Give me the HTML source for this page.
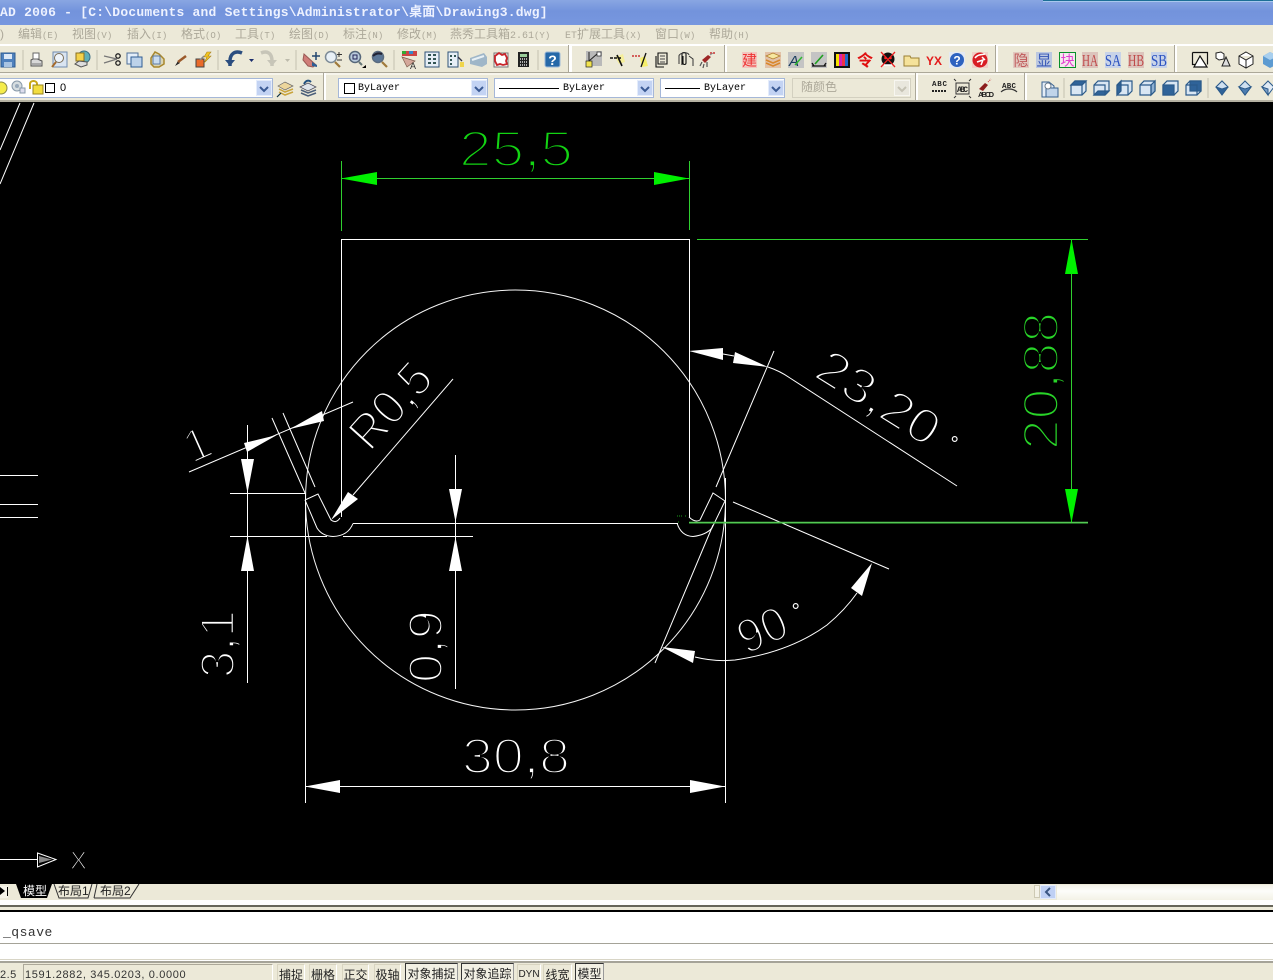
<!DOCTYPE html>
<html><head><meta charset="utf-8"><style>
html,body{margin:0;padding:0;background:#000;width:1273px;height:980px;overflow:hidden}
*{box-sizing:border-box}
.a{position:absolute}
#root{position:relative;width:1273px;height:980px;overflow:hidden;font-family:"Liberation Sans","Noto Sans CJK SC",sans-serif}
.m{position:absolute;top:27px;font-size:12px;line-height:15px;color:#aca899;white-space:nowrap;font-family:"Liberation Sans","WenQuanYi Zen Hei","Noto Sans CJK SC",sans-serif}
.m small{font-size:9px;font-family:"Liberation Mono",monospace}
.combo{position:absolute;top:78px;height:20px;background:#fff;border:1px solid #a5b7d8;font:10px/18px "Liberation Mono",monospace;color:#000}
.btn{position:absolute;top:1px;right:0;width:16px;height:16px;background:#c3d3f3;border:1px solid #e4ecfb}
.btn svg{position:absolute;left:2px;top:3px}
.s{position:absolute;top:964px;height:16px;font:12px/20px "Liberation Sans","WenQuanYi Zen Hei","Noto Sans CJK SC",sans-serif;color:#222;text-align:center;border:1px solid #d8d4c0;border-right-color:#fff;border-bottom:0;white-space:nowrap;overflow:hidden}
.s.p{border:1px solid #333;border-bottom:0;border-right-color:#999;background:#f2f0e4;top:963px;height:17px;line-height:21px}
</style></head><body><div id="root">
<div class="a" style="left:0;top:0;width:1273px;height:25px;background:linear-gradient(#89a6e2,#7393dc 45%,#7797df)"></div>
<div class="a" style="left:1043px;top:0;width:230px;height:2px;background:#a8c8ee;border-top:1px solid #1c6f96"></div>
<div class="a" style="left:0;top:4px;font:bold 13px/18px 'Liberation Mono','Noto Sans CJK SC',monospace;letter-spacing:.22px;color:#eef2ff;white-space:pre">AD 2006 - [C:\Documents and Settings\Administrator\桌面\Drawing3.dwg]</div>
<div class="a" style="left:0;top:25px;width:1273px;height:77px;background:#ece9d8"></div>
<div class="m" style="left:0">)</div>
<div class="m" style="left:18px">编辑<small>(E)</small></div>
<div class="m" style="left:72px">视图<small>(V)</small></div>
<div class="m" style="left:127px">插入<small>(I)</small></div>
<div class="m" style="left:181px">格式<small>(O)</small></div>
<div class="m" style="left:235px">工具<small>(T)</small></div>
<div class="m" style="left:289px">绘图<small>(D)</small></div>
<div class="m" style="left:343px">标注<small>(N)</small></div>
<div class="m" style="left:397px">修改<small>(M)</small></div>
<div class="m" style="left:450px">燕秀工具箱<small style="font-size:10px">2.61</small><small>(Y)</small></div>
<div class="m" style="left:565px"><small style="font-size:10px">ET</small>扩展工具<small>(X)</small></div>
<div class="m" style="left:655px">窗口<small>(W)</small></div>
<div class="m" style="left:709px">帮助<small>(H)</small></div>
<div class="a" style="left:0;top:44px;width:1273px;height:2px;background:#fff"></div>
<div class="a" style="left:0;top:72px;width:1273px;height:1px;background:#aca899"></div>
<div class="a" style="left:0;top:73px;width:1273px;height:2px;background:#f7f5ec"></div>
<div class="a" style="left:0;top:100px;width:1273px;height:2px;background:#b5b2a2"></div>
<!-- toolbar breaks -->
<div class="a" style="left:568px;top:45px;width:1px;height:27px;background:#aca899"></div><div class="a" style="left:569px;top:45px;width:3px;height:27px;background:#fff"></div>
<div class="a" style="left:724px;top:45px;width:1px;height:27px;background:#aca899"></div><div class="a" style="left:725px;top:45px;width:2px;height:27px;background:#fff"></div>
<div class="a" style="left:995px;top:45px;width:1px;height:27px;background:#aca899"></div><div class="a" style="left:996px;top:45px;width:2px;height:27px;background:#fff"></div>
<div class="a" style="left:1174px;top:45px;width:1px;height:27px;background:#aca899"></div><div class="a" style="left:1175px;top:45px;width:2px;height:27px;background:#fff"></div>
<div class="a" style="left:323px;top:73px;width:1px;height:27px;background:#aca899"></div><div class="a" style="left:324px;top:73px;width:2px;height:27px;background:#fff"></div>
<div class="a" style="left:915px;top:73px;width:1px;height:27px;background:#aca899"></div><div class="a" style="left:916px;top:73px;width:2px;height:27px;background:#fff"></div>
<div class="a" style="left:1024px;top:73px;width:1px;height:27px;background:#aca899"></div><div class="a" style="left:1025px;top:73px;width:2px;height:27px;background:#fff"></div>
<!-- combos -->
<div class="combo" style="left:-2px;width:275px"><span class="a" style="left:61px;top:0;font-size:11px;font-family:'Liberation Sans'">0</span><div class="btn"><svg width="10" height="10"><path d="M1 3l4 4 4-4" fill="none" stroke="#3a5a94" stroke-width="2"/></svg></div></div>
<div class="combo" style="left:338px;width:150px"><span class="a" style="left:5px;top:4px;width:11px;height:11px;border:1px solid #000"></span><span class="a" style="left:19px;top:1px">ByLayer</span><div class="btn"><svg width="10" height="10"><path d="M1 3l4 4 4-4" fill="none" stroke="#3a5a94" stroke-width="2"/></svg></div></div>
<div class="combo" style="left:494px;width:160px"><span class="a" style="left:4px;top:9px;width:60px;height:1px;background:#000"></span><span class="a" style="left:68px;top:1px">ByLayer</span><div class="btn"><svg width="10" height="10"><path d="M1 3l4 4 4-4" fill="none" stroke="#3a5a94" stroke-width="2"/></svg></div></div>
<div class="combo" style="left:660px;width:125px"><span class="a" style="left:4px;top:9px;width:35px;height:1px;background:#000"></span><span class="a" style="left:43px;top:1px">ByLayer</span><div class="btn"><svg width="10" height="10"><path d="M1 3l4 4 4-4" fill="none" stroke="#3a5a94" stroke-width="2"/></svg></div></div>
<div class="combo" style="left:792px;width:119px;background:#ece9d8;border-color:#d3d0c0;color:#aca899;font:12px/18px 'Liberation Sans','Noto Sans CJK SC',sans-serif"><span class="a" style="left:8px;top:-1px">随颜色</span><div class="btn" style="background:#e9e7dd;border-color:#f7f6f0"><svg width="10" height="10"><path d="M1 3l4 4 4-4" fill="none" stroke="#c5c2b4" stroke-width="2"/></svg></div></div>
<!-- toolbar icons -->
<svg class="a" style="left:0;top:44px" width="1273" height="58" viewBox="0 44 1273 58" font-family="'Liberation Sans','Noto Sans CJK SC',sans-serif">
<g stroke="#c4c1b0" stroke-width="1"><path d="M23 50v20M97 50v20M218 50v20M296 50v20M394 50v20M538 50v20M1064 78v20M1208 78v20"/></g>
<!-- save -->
<rect x="1" y="53" width="14" height="14" fill="#4f81bd" stroke="#2f5d94"/><rect x="4" y="54" width="8" height="5" fill="#dce8f6"/><rect x="4" y="62" width="8" height="5" fill="#a9c4e2"/>
<!-- print -->
<path d="M31 60l4-2 7 3v5h-11z" fill="#d8d8d8" stroke="#555"/><rect x="33" y="53" width="6" height="6" fill="#fff" stroke="#666"/><path d="M32 64h9" stroke="#777"/>
<!-- preview -->
<rect x="53" y="52" width="14" height="15" fill="#d9e4f1" stroke="#6f8bb0"/><circle cx="59" cy="58" r="4.5" fill="#eef4fb" stroke="#7a6e58"/><path d="M56 62l-4 5" stroke="#a56a2b" stroke-width="2"/>
<!-- publish -->
<circle cx="84" cy="57" r="6" fill="#5fb0b8" stroke="#3a6d83"/><rect x="76" y="53" width="8" height="8" fill="#f4d24a" stroke="#8a7020"/><path d="M75 64l4-3 8 1v3l-6 2z" fill="#ddd" stroke="#555"/>
<!-- scissors -->
<path d="M104 56l13 3 M104 63l13-4" stroke="#777" stroke-width="1.2" fill="none"/><circle cx="118" cy="56" r="2.2" fill="none" stroke="#222" stroke-width="1.3"/><circle cx="118" cy="63" r="2.2" fill="none" stroke="#222" stroke-width="1.3"/>
<!-- copy -->
<rect x="127" y="53" width="11" height="11" fill="#e4eef9" stroke="#4e6f97"/><rect x="131" y="57" width="11" height="10" fill="#bcd2ea" stroke="#2f5d94"/>
<!-- paste -->
<path d="M151 58l4-6 4 2 5 5v5l-5 3h-5l-3-3z" fill="#d9d4b4" stroke="#a8872c" stroke-width="1.5"/><rect x="153" y="56" width="7" height="8" fill="#c9dcf0" stroke="#5a7aa3"/>
<!-- brush -->
<path d="M175 66l3-5 2 2z" fill="#222"/><path d="M178 62l8-6" stroke="#9b5a2b" stroke-width="2.5"/>
<!-- match -->
<rect x="196" y="59" width="8" height="8" fill="#ea6a2a" stroke="#444"/><path d="M200 60l4-4" stroke="#888" stroke-width="1.5"/><path d="M207 52l-3 5h3l-3 6 7-7h-3l3-4z" fill="#f2c520" stroke="#a8801c" stroke-width=".6"/>
<!-- undo -->
<path d="M242 53c-7-3-12 1-12 8v5" fill="none" stroke="#2a4d7f" stroke-width="3.5"/><path d="M225 60h10l-5 6z" fill="#2a4d7f"/><path d="M249 59h5l-2.500 3z" fill="#1a2c6c"/>
<path d="M261 53c7-3 11 1 11 8v5" fill="none" stroke="#c7c5b8" stroke-width="3.5"/><path d="M267 60h10l-5 6z" fill="#c7c5b8"/><path d="M285 59h5l-2.500 3z" fill="#bdbbac"/>
<!-- pan -->
<path d="M304 54l12 11-3 2-5-1-5-6z" fill="#cf7d78" stroke="#9a5a55"/><path d="M312 62l5 3v2l-5-1z" fill="#2d5f95"/><path d="M316 52v8M312 56h8" stroke="#22466f" stroke-width="1.5"/>
<!-- zooms -->
<circle cx="331" cy="57" r="5.500" fill="#e8f0f7" stroke="#7c8a96" stroke-width="1.500"/><path d="M335 62l5 5" stroke="#a07a3c" stroke-width="2.200"/><path d="M339 52v5M337 54.500h5M337 60h5" stroke="#333"/>
<circle cx="355" cy="57" r="5.500" fill="#bcd" stroke="#56677a" stroke-width="1.500"/><rect x="353" y="55" width="4" height="4" fill="none" stroke="#225"/><path d="M359 62l3 3" stroke="#677" stroke-width="2"/><path d="M362 68l4-3v3z" fill="#000"/>
<circle cx="378" cy="57" r="5.500" fill="#5b7696" stroke="#5b6c7f" stroke-width="1.500"/><path d="M382 62l5 5" stroke="#a07a3c" stroke-width="2.200"/><path d="M373 56c3-3 6-3 9-2" stroke="#223" fill="none" stroke-width="2"/>
<!-- match props etc -->
<rect x="402" y="51" width="15" height="5" fill="#c44"/><rect x="402" y="51" width="4" height="3" fill="#3a3"/><rect x="409" y="51" width="4" height="3" fill="#38c"/><path d="M402 57l13 4-8 6z" fill="#d4a79a" stroke="#7b5a4a" stroke-width=".7"/><text x="410" y="69" font-size="9" fill="#333">A</text>
<rect x="425" y="52" width="14" height="15" fill="#e6eef6" stroke="#2f5277"/><path d="M428 55h3M433 55h3M428 59h3M433 59h3M428 63h3M433 63h3" stroke="#355" stroke-width="2"/>
<rect x="448" y="52" width="10" height="15" fill="#e6eef6" stroke="#2f5277"/><path d="M450 56h2M450 60h2M450 64h2M454 56h2" stroke="#355" stroke-width="2"/><path d="M458 57l4 4" stroke="#334" stroke-width="1.300"/><rect x="460" y="62" width="4" height="5" fill="#f0d54a"/>
<path d="M470 58l14-5 3 4v7l-5 3-12-3z" fill="#9fb6c8"/><path d="M472 60l12-4" stroke="#e8f0f5" stroke-width="2"/>
<rect x="494" y="53" width="14" height="14" fill="#f5f0f0" stroke="#777"/><path d="M495 56l4-3 3 2 3-1 2 4-1 3 1 3-4 1-3-1-3 1-2-4z" fill="#fff" stroke="#c8252b" stroke-width="1.800"/>
<rect x="518" y="52" width="11" height="15" fill="#222"/><rect x="520" y="54" width="7" height="3" fill="#9c9"/><path d="M520 59h7M520 62h7M520 65h7" stroke="#ddd" stroke-dasharray="1 1" stroke-width="1.500"/>
<!-- help -->
<rect x="545" y="52" width="15" height="15" rx="2" fill="#2568a8" stroke="#9db9d8"/><text x="552.500" y="65" font-size="14" font-weight="bold" fill="#fff" text-anchor="middle">?</text>
<!-- 燕秀 -->
<rect x="586" y="51" width="16" height="15" fill="#b9b9b9"/><rect x="586" y="61" width="6" height="6" fill="#f2e34e" stroke="#222" stroke-width=".7"/><path d="M589 52v9M589 61l8-7" stroke="#222"/><rect x="597" y="52" width="4" height="4" fill="#fff" stroke="#222" stroke-width=".7"/>
<path d="M615 57l8-3 2 8-6 2z" fill="#f5ee9a"/><path d="M617 55l5 11" stroke="#111" stroke-width="1.600"/><path d="M610 58h12" stroke="#111" stroke-width="1.500" stroke-dasharray="3 1"/>
<path d="M640 58l5-2 3 10-6 1z" fill="#f5ee6a"/><path d="M632 56h9" stroke="#c33" stroke-dasharray="2 1" stroke-width="1.500"/><path d="M646 53l-5 14" stroke="#111" stroke-width="1.300"/>
<path d="M658 53h9v11h-9z M656 56v11h8" fill="none" stroke="#111" stroke-width="1.100"/><path d="M660 56h5M660 59h5M660 62h5" stroke="#444"/>
<path d="M682 65V54c0-2 4-2 4 0v9c0 2-3 2-3 0v-7" fill="none" stroke="#111" stroke-width="1.100"/><path d="M679 64v-8c0-3 9-5 10-1M689 56l4 3v7" fill="none" stroke="#333"/>
<path d="M702 60l6-5 3 2-6 6z" fill="#9e2727"/><path d="M702 62l-2 4M704 64l-1 4M707 62l0 5" stroke="#555" stroke-width="1.200"/><circle cx="714" cy="53" r="1" fill="#c33"/><circle cx="711" cy="53" r="1" fill="#c33"/><path d="M710 55l3-2" stroke="#888"/>
<!-- red group -->
<rect x="742" y="52" width="15" height="16" fill="#f3c6bf"/><text x="749.500" y="65.500" font-size="15" fill="#e33" text-anchor="middle">建</text>
<rect x="765" y="52" width="16" height="16" fill="#e2c2a8"/><path d="M766 56l7-3 7 3-7 3z" fill="#f6e7a0" stroke="#b17a2a" stroke-width=".7"/><path d="M766 60l7 3 7-3M766 63l7 3 7-3" fill="none" stroke="#d9872b" stroke-width="1.500"/>
<rect x="788" y="52" width="16" height="16" fill="#c4c4c4"/><text x="789" y="66" font-size="15" font-style="italic" fill="#173a5c">A</text><path d="M795 65l7-8" stroke="#2fb62f" stroke-width="1.500"/>
<rect x="811" y="52" width="16" height="16" fill="#c4c4c4"/><path d="M812 66h14M812 63l2 3M826 63l-2 3" stroke="#111" stroke-width="1.300"/><path d="M815 64l8-9" stroke="#1f9f1f" stroke-width="1.600"/>
<rect x="834" y="52" width="16" height="16" fill="#111"/><rect x="836" y="54" width="3" height="12" fill="#f6e300"/><rect x="839" y="54" width="3" height="12" fill="#d81fb5"/><rect x="842" y="54" width="3" height="12" fill="#e34"/><rect x="845" y="54" width="3" height="12" fill="#26c"/>
<text x="865" y="66" font-size="16" fill="#e01010" font-weight="bold" text-anchor="middle">令</text>
<circle cx="888" cy="59" r="6.500" fill="#111"/><path d="M881 52l14 15M895 52l-14 15" stroke="#e22" stroke-width="1.300"/><circle cx="885.500" cy="58" r="1.300" fill="#f22"/><circle cx="890.500" cy="58" r="1.300" fill="#f22"/><path d="M884 65h8" stroke="#fff" stroke-width="1.500"/>
<path d="M904 56h6l1 2h8v8h-15z" fill="#f5e29a" stroke="#9a8033"/><text x="934" y="65" font-size="12" font-weight="bold" fill="#e31b1b" text-anchor="middle">YX</text>
<rect x="949" y="52" width="16" height="16" fill="#e4e9f2"/><circle cx="957" cy="60" r="7" fill="#2d62bf"/><text x="957" y="64.500" font-size="12" font-weight="bold" fill="#fff" text-anchor="middle">?</text>
<rect x="972" y="52" width="16" height="16" fill="#f0cfc8"/><circle cx="980" cy="60" r="7.500" fill="#d81d24"/><path d="M975 58c3-4 6-3 10-4M977 62l6-2-2 5M982 57l3 3" fill="none" stroke="#fff" stroke-width="1.500"/>
<rect x="1013" y="52" width="16" height="16" fill="#e2c9c0"/><text x="1021" y="65.500" font-size="15" fill="#c05a5a" text-anchor="middle">隐</text>
<rect x="1036" y="52" width="16" height="16" fill="#bcc8e0"/><text x="1044" y="65.500" font-size="15" fill="#3757b7" text-anchor="middle">显</text>
<rect x="1059.500" y="52.500" width="16" height="15" fill="#f3e9ee" stroke="#0a8f2a"/><text x="1067.500" y="65.500" font-size="14" fill="#e23fd0" text-anchor="middle">块</text>
<rect x="1082" y="52" width="16" height="16" fill="#dcc4bc"/><text x="1082" y="66" font-size="17" font-family="'Liberation Serif'" fill="#bf4a4a" textLength="16" lengthAdjust="spacingAndGlyphs">HA</text>
<rect x="1105" y="52" width="16" height="16" fill="#c8d3e8"/><text x="1105" y="66" font-size="17" font-family="'Liberation Serif'" fill="#2b52c0" textLength="16" lengthAdjust="spacingAndGlyphs">SA</text>
<rect x="1128" y="52" width="16" height="16" fill="#dcc4bc"/><text x="1128" y="66" font-size="17" font-family="'Liberation Serif'" fill="#bf4a4a" textLength="16" lengthAdjust="spacingAndGlyphs">HB</text>
<rect x="1151" y="52" width="16" height="16" fill="#c8d3e8"/><text x="1151" y="66" font-size="17" font-family="'Liberation Serif'" fill="#2b52c0" textLength="16" lengthAdjust="spacingAndGlyphs">SB</text>
<!-- solids -->
<path d="M1192.500 52.500h15v12M1192.500 52.500v12h3" fill="none" stroke="#111" stroke-width="1.200"/><path d="M1200 56l-6 11h13z" fill="#fff" stroke="#111" stroke-width="1.200"/>
<path d="M1216 53l5-1 3 2v5l-5 1-3-2z" fill="#fff" stroke="#222"/><path d="M1226 57l-4 9h8z" fill="#ddd" stroke="#222"/>
<path d="M1246 52l7 4v8l-7 4-7-4v-8z M1239 56l7 4 7-4M1246 60v8" fill="#fff" stroke="#222"/>
<path d="M1270 52l8 4v8l-8 4-7-4v-8z" fill="#5d9bd1"/><path d="M1263 56l7 4 8-4-8-4z" fill="#a8cfee"/>
<!-- row 2 left -->
<circle cx="1" cy="88" r="6" fill="#f5ec4b" stroke="#8a8a4a"/><circle cx="17" cy="86" r="5" fill="#d6dde0" stroke="#89a"/><circle cx="17" cy="86" r="2" fill="#9ab"/><rect x="20" y="88" width="5" height="5" fill="#dde" stroke="#89a"/>
<path d="M30 89v-5c0-4 7-4 7 0v2" fill="none" stroke="#c9a718" stroke-width="2"/><rect x="33" y="85" width="10" height="9" fill="#f2dd40" stroke="#9a8620"/>
<rect x="45.500" y="83.500" width="9" height="9" fill="#fff" stroke="#000" stroke-width="1"/>
<path d="M278 86l7-4 8 4-8 4z" fill="#ecd69c" stroke="#666" stroke-width=".7"/><path d="M279 89l6 3 8-3M279 92l6 3 8-3" fill="none" stroke="#c9a43c" stroke-width="1.500"/><path d="M277 97l4-4" stroke="#134" stroke-width="1.200"/>
<path d="M300 87l8-4 8 4-8 4z" fill="#dfe4ea" stroke="#445" stroke-width=".7"/><path d="M301 90l7 3 8-3M301 93l7 3 8-3" fill="none" stroke="#4b5f7a" stroke-width="1.500"/><path d="M304 84c2-4 5-4 7-2" stroke="#23517f" stroke-width="2" fill="none"/>
<!-- text icons -->
<text x="932" y="86" font-size="7.500" font-weight="bold" font-family="'Liberation Mono'" fill="#222" textLength="15">ABC</text><path d="M932 91h15" stroke="#222" stroke-width="2" stroke-dasharray="2 1"/>
<rect x="956" y="83" width="13" height="11" fill="none" stroke="#333"/><text x="957" y="92" font-size="8" font-weight="bold" font-family="'Liberation Mono'" fill="#222" textLength="11">ABC</text><path d="M956 81l-2-2M969 81l2-2M956 96l-2 2M969 96l2 2" stroke="#333"/>
<path d="M979 89l6-6 3 2-5 6z" fill="#8c1c1c"/><text x="978" y="97" font-size="7.500" font-weight="bold" fill="#222" textLength="16">ABCD</text><path d="M988 82l3-3" stroke="#c33" stroke-dasharray="1 1"/>
<text x="1002" y="88" font-size="7.500" font-weight="bold" font-family="'Liberation Mono'" fill="#222" textLength="14">ABC</text><path d="M1001 92c4-4 12-4 16 0" stroke="#333" fill="none" stroke-width="1.200"/>
<!-- views -->
<path d="M1042 82h7l5 4v11h-12z" fill="#e4edf7" stroke="#38618f"/><rect x="1046" y="88" width="12" height="9" fill="#c0d4ea" stroke="#38618f"/><circle cx="1048" cy="86" r="3" fill="#fff" stroke="#6a7a8a"/>
<g stroke="#2b5a8a" stroke-width="1.200"><path d="M1071 85l4-4h11v10l-4 4h-11z" fill="#d9e6f3"/><path d="M1071 85h11v10M1082 85l4-4" fill="none"/><path d="M1071 85h11l4-4h-11z" fill="#2f6399"/>
<path d="M1094 85l4-4h11v10l-4 4h-11z" fill="#d9e6f3"/><path d="M1094 95l4-4h11l-4 4z" fill="#2f6399"/><path d="M1094 85h11v10" fill="none"/>
<path d="M1117 85l4-4h11v10l-4 4h-11z" fill="#d9e6f3"/><path d="M1117 85l4-4v10l-4 4z" fill="#2f6399"/><path d="M1117 85h11v10" fill="none"/>
<path d="M1140 85l4-4h11v10l-4 4h-11z" fill="#d9e6f3"/><path d="M1151 85l4-4v10l-4 4z" fill="#8fb0d2"/><path d="M1140 85h11v10" fill="none"/>
<path d="M1163 85l4-4h11v10l-4 4h-11z" fill="#d9e6f3"/><rect x="1163" y="85" width="11" height="10" fill="#2f6399"/>
<path d="M1186 85l4-4h11v10l-4 4h-11z" fill="#d9e6f3"/><rect x="1190" y="81" width="11" height="10" fill="#2f6399"/><path d="M1186 85h11v10" fill="none"/></g>
<g stroke="#2b5a8a"><path d="M1222 81l6 6-6 8-6-8z" fill="#2f6399"/><path d="M1216 87l6-6 6 6-6 2z" fill="#cfe0f0"/>
<path d="M1245 81l6 6-6 8-6-8z" fill="#cfe0f0"/><path d="M1239 87l6 2 6-2-6 8z" fill="#4c7cb0"/>
<path d="M1268 81l6 6-6 8-6-8z" fill="#e0eaf4"/><path d="M1262 87l6 2v6z" fill="#7ca0c8"/></g>
</svg>
<!-- canvas -->
<svg class="a" style="left:0;top:0" width="1273" height="980" viewBox="0 0 1273 980">
<rect x="0" y="102" width="1273" height="782" fill="#000"/>
<g font-family="'Liberation Sans',sans-serif" stroke="#000" stroke-width="2.500" fill="#fff">
<text x="459" y="166" font-size="50" textLength="114" lengthAdjust="spacingAndGlyphs" fill="#13d413">25<tspan stroke-width="1.800">,</tspan>5</text>
<text x="462" y="773" font-size="49" textLength="108" lengthAdjust="spacingAndGlyphs">30<tspan stroke-width="1.800">,</tspan>8</text>
<text transform="translate(1058,450) rotate(-90)" font-size="50" textLength="138" lengthAdjust="spacingAndGlyphs" fill="#28d428">20<tspan stroke-width="1.800">,</tspan>88</text>
<text transform="translate(234,678) rotate(-90)" font-size="48" textLength="68" lengthAdjust="spacingAndGlyphs">3<tspan stroke-width="1.800">,</tspan>1</text>
<text transform="translate(442,683) rotate(-90)" font-size="48" textLength="73" lengthAdjust="spacingAndGlyphs">0<tspan stroke-width="1.800">,</tspan>9</text>
<text transform="translate(370,453) rotate(-48)" font-size="49" textLength="98" lengthAdjust="spacingAndGlyphs">R0<tspan stroke-width="1.800">,</tspan>5</text>
<text transform="translate(812,376) rotate(32)" font-size="49" textLength="136" lengthAdjust="spacingAndGlyphs">23<tspan stroke-width="1.800">,</tspan>20</text>
<text transform="translate(746,655) rotate(-24)" font-size="48" textLength="50" lengthAdjust="spacingAndGlyphs">90</text>
<text transform="translate(192,464) rotate(-24)" font-size="46">1</text>
<text x="70" y="869" font-size="25" stroke-width="1.400" textLength="17" lengthAdjust="spacingAndGlyphs">X</text>
</g>
<g font-family="'Liberation Sans',sans-serif" fill="#fff" font-size="21">
<text x="950.500" y="451">°</text>
<text x="791.500" y="618">°</text>
</g>
<g fill="none" stroke="#fff" stroke-width="1">
<circle cx="515.500" cy="500" r="210" stroke="#f4f4f4"/>
<path d="M341.500 239V517M341 239.500H689.500M689.500 239V517"/>
<path d="M305.500 493V803M725.500 478V803M305 786.500H725"/>
<path d="M230 493.500H305M230 536.500H327M343 536.500H473M247.500 425V683M455.500 455V689"/>
<path d="M353 523.500H678"/>
<path d="M305 500L318 494L331 520Q336 524 340 518M305 500L317 528Q322 536 333 536.500Q348 536 353 523.500"/>
<path d="M677 523Q681 536 693 536.500Q706 535 712 528L725 501L713 493L700 520Q695 523 689 517"/>
<path d="M189 472L353 402M272 418L305 493M283 413L315 487"/>
<path d="M453 379L353 495"/>
<path d="M723 354L734 356M768 367Q780 371 790 378L957 486M774 351L716 487"/>
<path d="M733 502L889 569M713 525L655 663"/>
<path d="M695 657Q715 662 735 660Q790 652 827 625Q845 610 857 593"/>
<path d="M20 103L0 150M34 103L0 184M0 475.500H38M0 504.500H38M0 517.500H38"/>
<path d="M0 859.500H38M37.500 853V867L56 859.500Z"/>
</g>
<path d="M39 856L52 859.500L39 863Z" fill="#888"/>
<g fill="#fff">
<path d="M305 786.500L340 780V793ZM725 786.500L690 780V793Z"/>
<path d="M247.500 493L241 459H254ZM247.500 536L241 571H254Z"/>
<path d="M455.500 522L449 489H462ZM455.500 537L449 571H462Z"/>
<path d="M277 435L244 443L247 452ZM290 429L322 411L324 421Z"/>
<path d="M331 520L348 492L358 499Z"/>
<path d="M689 351L723 348V360ZM768 367L735 352L733 363Z"/>
<path d="M662 647L695 651L693 663ZM872 563L851 588L862 596Z"/>
</g>
<g fill="none" stroke="#2fd02f" stroke-width="1">
<path d="M341.500 161V231M689.500 161V230M341 178.500H689M697 239.500H1088M1071.500 239V523M689 523H1088"/>
</g>
<path d="M689 522.500H1088" stroke="#55c855" stroke-width="1.500"/>
<path d="M677 516h3M681 516h2M685 516h2M678 522h2" stroke="#1a9a1a" stroke-width="1" stroke-dasharray="1 1" fill="none"/>
<g fill="#00f000">
<path d="M341 178.500L377 172V185ZM689 178.500L654 172V185Z"/>
<path d="M1071.500 239L1065 274H1078ZM1071.500 523L1065 489H1078Z"/>
</g>
</svg>
<!-- tab bar -->
<div class="a" style="left:0;top:884px;width:1273px;height:16px;background:#ece9d8"></div>
<div class="a" style="left:1057px;top:885px;width:216px;height:15px;background:linear-gradient(#f3f1e7,#fdfdfa 40%,#f4f2e6)"></div>
<svg class="a" style="left:0;top:884px" width="150" height="16" font-family="'Liberation Sans','WenQuanYi Zen Hei','Noto Sans CJK SC',sans-serif">
<rect x="0" y="2" width="8" height="12" fill="#f5f3e8"/><path d="M0 3l5 4-5 4z" fill="#000"/><path d="M7.500 3v9" stroke="#000"/>
<path d="M16 0L21 14H47L52 0Z" fill="#000"/>
<path d="M54 0L59 14H88L92 0M94 14H130L139 0M94 14L97 0" fill="none" stroke="#333"/>
<text x="23" y="11" font-size="12" fill="#fff">模型</text>
<text x="58" y="11" font-size="12" fill="#222">布局1</text>
<text x="100" y="11" font-size="12" fill="#222">布局2</text>
</svg>
<div class="a" style="left:1034px;top:885px;width:6px;height:13px;background:#f3f1e6;border:1px solid #cdc9b4"></div>
<div class="a" style="left:1040px;top:885px;width:16px;height:14px;background:#bfd0f4;border:1px solid #e2eafa"><svg width="14" height="12" style="position:absolute;left:0;top:0"><path d="M9 2L5 6l4 4" fill="none" stroke="#3a5682" stroke-width="2"/></svg></div>
<div class="a" style="left:0;top:900px;width:1273px;height:5px;background:#fff"></div>
<div class="a" style="left:0;top:905px;width:1273px;height:7px;background:#ece9d8;border-top:2px solid #67665a;border-bottom:2px solid #000"></div>
<!-- command -->
<div class="a" style="left:0;top:912px;width:1273px;height:49px;background:#fff"></div>
<div class="a" style="left:3px;top:925px;font:13px/16px 'Liberation Mono',monospace;color:#333;letter-spacing:.5px">_qsave</div>
<div class="a" style="left:0;top:943px;width:1273px;height:1px;background:#a5a398"></div>
<div class="a" style="left:0;top:959px;width:1273px;height:1px;background:#d8d5c6"></div>
<div class="a" style="left:0;top:961px;width:1273px;height:2px;background:#a5a398"></div>
<!-- status -->
<div class="a" style="left:0;top:963px;width:1273px;height:17px;background:#ece9d8"></div>
<div class="a" style="left:0;top:968px;font:11px/14px 'Liberation Sans',sans-serif;color:#333;letter-spacing:.5px">2.5</div>
<div class="a" style="left:23px;top:964px;width:250px;height:16px;border:1px solid #aca899;border-bottom:0;border-right-color:#fff;font:11px/20px 'Liberation Sans',sans-serif;color:#333;padding-left:1px;letter-spacing:.65px;white-space:nowrap;overflow:hidden">1591.2882, 345.0203, 0.0000</div>
<div class="s" style="left:277px;width:28px">捕捉</div>
<div class="s" style="left:309px;width:28px">栅格</div>
<div class="s" style="left:342px;width:27px">正交</div>
<div class="s" style="left:374px;width:27px">极轴</div>
<div class="s p" style="left:405px;width:53px">对象捕捉</div>
<div class="s p" style="left:461px;width:53px">对象追踪</div>
<div class="s" style="left:517px;width:24px;font-size:10px">DYN</div>
<div class="s" style="left:543px;width:29px">线宽</div>
<div class="s p" style="left:575px;width:29px">模型</div>
</div></body></html>
